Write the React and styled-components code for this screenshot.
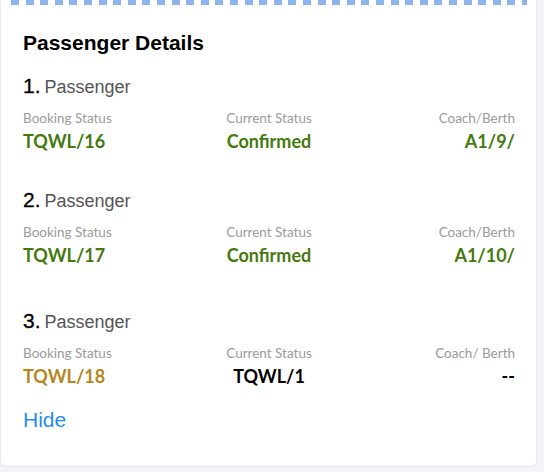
import React from 'react'
import styled, { createGlobalStyle } from 'styled-components'

const Global = createGlobalStyle`
  html, body {
    margin: 0;
    padding: 0;
    background: #f4f4f8;
  }
`

const Card = styled.section`
  position: relative;
  box-sizing: border-box;
  width: 537px;
  height: 467px;
  background: #fff;
  border: 1px solid #e8e8ee;
  border-top: none;
  border-radius: 0 0 6px 6px;
  padding: 31px 21px 0 22px;
  &::before {
    content: '';
    position: absolute;
    top: 0;
    left: 10px;
    right: 9px;
    height: 5px;
    background: repeating-linear-gradient(
      to right,
      #8db4ee 0,
      #8db4ee 8px,
      transparent 8px,
      transparent 14.6px
    );
  }
`

const Title = styled.h2`
  margin: 0;
  font-family: 'Liberation Sans', Arial, sans-serif;
  font-weight: 700;
  font-size: 21px;
  line-height: 24px;
  color: #000;
`

const Passenger = styled.div`
  margin-top: ${p => p.$gap}px;
`

const Heading = styled.div`
  font-family: 'Liberation Sans', Arial, sans-serif;
  line-height: 24px;
  display: flex;
  align-items: baseline;
  gap: 4px;
`

const Index = styled.span`
  font-size: 21px;
  color: #000;
  -webkit-text-stroke: 0.3px #000;
`

const Name = styled.span`
  font-size: 18px;
  color: #555;
`

const Grid = styled.div`
  display: grid;
  grid-template-columns: 1fr 1fr 1fr;
  margin-top: 11px;
`

const Cell = styled.div`
  display: flex;
  flex-direction: column;
  gap: 5px;
  align-items: ${p => p.$align};
  font-family: Lato, 'Open Sans', sans-serif;
`

const Label = styled.span`
  font-size: 13.5px;
  line-height: 16px;
  color: #9b9b9b;
`

const Value = styled.span`
  font-size: 18px;
  line-height: 20px;
  font-weight: 700;
  color: ${p => p.$color};
`

const Hide = styled.button`
  display: block;
  margin-top: 22px;
  padding: 0;
  border: none;
  background: none;
  font-family: 'Liberation Sans', Arial, sans-serif;
  font-size: 21px;
  line-height: 24px;
  color: #1f8ef1;
  cursor: pointer;
`

const GREEN = '#437a0e'
const ORANGE = '#b8861e'
const BLACK = '#000'

const passengers = [
  { n: 1, gap: 19, booking: 'TQWL/16', bookingColor: GREEN, current: 'Confirmed', currentColor: GREEN, berthLabel: 'Coach/Berth', berth: 'A1/9/', berthColor: GREEN },
  { n: 2, gap: 37, booking: 'TQWL/17', bookingColor: GREEN, current: 'Confirmed', currentColor: GREEN, berthLabel: 'Coach/Berth', berth: 'A1/10/', berthColor: GREEN },
  { n: 3, gap: 44, booking: 'TQWL/18', bookingColor: ORANGE, current: 'TQWL/1', currentColor: BLACK, berthLabel: 'Coach/ Berth', berth: '--', berthColor: BLACK },
]

export default function App() {
  return (
    <>
      <Global />
      <Card>
        <Title>Passenger Details</Title>
        {passengers.map(p => (
          <Passenger key={p.n} $gap={p.gap}>
            <Heading>
              <Index>{p.n}.</Index>
              <Name>Passenger</Name>
            </Heading>
            <Grid>
              <Cell $align="flex-start">
                <Label>Booking Status</Label>
                <Value $color={p.bookingColor}>{p.booking}</Value>
              </Cell>
              <Cell $align="center">
                <Label>Current Status</Label>
                <Value $color={p.currentColor}>{p.current}</Value>
              </Cell>
              <Cell $align="flex-end">
                <Label>{p.berthLabel}</Label>
                <Value $color={p.berthColor}>{p.berth}</Value>
              </Cell>
            </Grid>
          </Passenger>
        ))}
        <Hide>Hide</Hide>
      </Card>
    </>
  )
}
